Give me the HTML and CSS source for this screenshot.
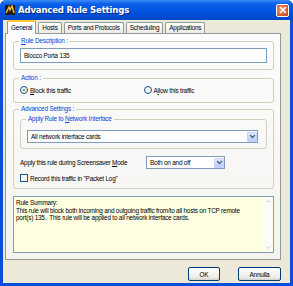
FILE: index.html
```html
<!DOCTYPE html>
<html>
<head>
<meta charset="utf-8">
<link rel="stylesheet" href="styles.css">
</head>
<body>
<div class="window">
  <div class="titlebar">
    <span class="appicon"><svg width="10" height="10" viewBox="0 0 10 10"><rect width="10" height="10" fill="#2b1a10"/><path d="M1 8 L4 2 L5 5 L7 1 L9 8" stroke="#f2c040" stroke-width="1.4" fill="none"/></svg></span>
    <span class="title">Advanced Rule Settings</span>
    <span class="close"><svg width="8" height="8" viewBox="0 0 8 8"><path d="M1 1 L7 7 M7 1 L1 7" stroke="#fff" stroke-width="1.6"/></svg></span>
  </div>
  <div class="client">
    <div class="tabs">
      <span class="tab active">General</span>
      <span class="tab">Hosts</span>
      <span class="tab">Ports and Protocols</span>
      <span class="tab">Scheduling</span>
      <span class="tab">Applications</span>
    </div>
    <div class="panel">
      <fieldset class="group g-desc">
        <legend><u>R</u>ule Description :</legend>
        <div class="input">Blocco Porta 135</div>
      </fieldset>
      <fieldset class="group g-action">
        <legend>Action :</legend>
        <div class="radios">
          <label class="radio"><span class="rb on"></span><span><u>B</u>lock this traffic</span></label>
          <label class="radio"><span class="rb"></span><span>A<u>l</u>low this traffic</span></label>
        </div>
      </fieldset>
      <fieldset class="group g-adv">
        <legend>Advanced Settings :</legend>
        <fieldset class="group g-net">
          <legend>Apply Rule to <u>N</u>etwork Interface</legend>
          <div class="select wide"><span class="val">All network interface cards</span><span class="arrow"><svg width="7" height="5" viewBox="0 0 7 5"><path d="M1 1 L3.5 3.5 L6 1" stroke="#4d6185" stroke-width="1.4" fill="none"/></svg></span></div>
        </fieldset>
        <div class="row-ss">
          <span class="ss-label">Apply this rule during Screensaver <u>M</u>ode</span>
          <div class="select small"><span class="val">Both on and off</span><span class="arrow"><svg width="7" height="5" viewBox="0 0 7 5"><path d="M1 1 L3.5 3.5 L6 1" stroke="#4d6185" stroke-width="1.4" fill="none"/></svg></span></div>
        </div>
        <label class="check"><span class="cb"></span><span>Record this traffic in "Packet Log"</span></label>
      </fieldset>
      <div class="summary">
        <div class="sum-text">Rule Summary:<br>This rule will block both incoming and outgoing traffic from/to all hosts on TCP remote port(s) 135.&nbsp; This rule will be applied to all network interface cards.</div>
        <div class="scroll"><span class="sb-up"><svg width="5" height="3" viewBox="0 0 5 3"><path d="M0.5 2.5 L2.5 0.5 L4.5 2.5" stroke="#c0c4d0" fill="none"/></svg></span><span class="sb-dn"><svg width="5" height="3" viewBox="0 0 5 3"><path d="M0.5 0.5 L2.5 2.5 L4.5 0.5" stroke="#c0c4d0" fill="none"/></svg></span></div>
      </div>
    </div>
    <div class="buttons">
      <span class="btn ok">OK</span>
      <span class="btn cancel">Annulla</span>
    </div>
  </div>
</div>
</body>
</html>
```
FILE: styles.css
```css
html, body { margin: 0; padding: 0; }
body { width: 293px; height: 286px; overflow: hidden; font-family: "Liberation Sans", Arial, sans-serif; font-size: 6.4px; letter-spacing: -0.2px; color: #000; }
.window { width: 293px; height: 286px; box-sizing: border-box; background: #0a4fd8; padding: 0 3px 3px 3px; display: flex; flex-direction: column; border-radius: 6px 6px 0 0; }
.titlebar { height: 20px; flex: none; margin: 0 -3px; padding: 0 4px 0 5px; display: flex; align-items: center; gap: 3px; background: linear-gradient(#3a8cf8 0%, #0a5ee8 20%, #0052e0 60%, #0046c8 100%); border-radius: 6px 6px 0 0; }
.appicon { width: 10px; height: 10px; display: flex; }
.title { flex: 1; color: #fff; font-family: "DejaVu Sans", sans-serif; font-weight: bold; font-size: 8.6px; letter-spacing: -0.2px; text-shadow: 1px 1px 0 #0a2a80; }
.close { width: 13px; height: 13px; box-sizing: border-box; border: 1px solid #fff; border-radius: 2px; background: radial-gradient(circle at 40% 40%, #f09a70, #d4542a 70%, #c03c18); display: flex; align-items: center; justify-content: center; }
.client { flex: 1; background: #ece9d8; padding: 1px 9px 0 2px; display: flex; flex-direction: column; }
.tabs { display: flex; align-items: flex-end; height: 12px; flex: none; padding-left: 2px; gap: 2px; position: relative; z-index: 1; }
.tab { height: 10px; line-height: 10px; padding: 0 3px; border: 1px solid #919b9c; border-bottom: none; border-radius: 2px 2px 0 0; background: linear-gradient(#fff, #ecebe5); white-space: nowrap; }
.tab.active { height: 12px; line-height: 12px; background: #fcfcfe; border-top: 2px solid #ffc83c; margin-bottom: -1px; padding: 0 3px; }
.panel { height: 227px; flex: none; box-sizing: border-box; border: 1px solid #919b9c; background: linear-gradient(#fcfcfe 0%, #f4f3ee 100%); padding: 3px 6px 0 7px; display: flex; flex-direction: column; }
.group { margin: 0; border: 1px solid #d0d0bf; border-radius: 3px; padding: 3px 6px 6px 6px; min-width: 0; }
.group legend { padding: 0 2px; margin-left: -1px; color: #0046d5; line-height: 8px; height: 8px; }
.input { height: 15px; box-sizing: border-box; border: 1px solid #7f9db9; background: #fff; padding-left: 3px; line-height: 13px; }
.g-action { margin-top: 4px; padding: 1px 6px 5px 6px; }
.radios { display: flex; height: 14px; align-items: center; }
.radio { display: flex; align-items: center; gap: 2px; width: 126px; }
.rb { width: 8px; height: 8px; border: 1px solid #1c5180; border-radius: 50%; background: #f2f2ee; box-sizing: border-box; position: relative; }
.rb.on::after { content: ""; position: absolute; left: 2px; top: 2px; width: 2px; height: 2px; border-radius: 50%; background: #21a121; }
.g-adv { margin-top: 2px; padding: 2px 6px 5px 6px; }
.g-net { padding: 7px 8px 5px 6px; }
.select { height: 13px; box-sizing: border-box; border: 1px solid #7f9db9; background: #fff; display: flex; align-items: center; padding-left: 3px; }
.select .val { flex: 1; }
.arrow { width: 10px; height: 10px; margin-right: 0; background: linear-gradient(#e4ecfc, #b9cdf6); border: 1px solid #c3d3fd; box-sizing: border-box; border-radius: 1px; display: flex; align-items: center; justify-content: center; }
.row-ss { display: flex; align-items: center; height: 13px; margin-top: 7px; }
.ss-label { width: 126px; }
.select.small { width: 79px; }
.check { display: flex; align-items: center; gap: 2px; height: 10px; margin-top: 4px; }
.cb { width: 8px; height: 8px; border: 1px solid #1c5180; background: #f4f4f0; box-sizing: border-box; }
.summary { margin-top: 7px; height: 57px; flex: none; box-sizing: border-box; border: 1px solid #7f9db9; background: #ffffe1; display: flex; }
.sum-text { flex: 1; padding: 2px 8px 2px 2px; line-height: 7.5px; }
.scroll { width: 8px; margin: 1px; background: #fbfbf8; display: flex; flex-direction: column; justify-content: space-between; align-items: center; padding: 2px 0; box-sizing: border-box; }
.scroll span { display: flex; }
.buttons { display: flex; justify-content: flex-end; gap: 18px; padding-top: 7px; }
.btn { width: 32px; height: 14px; box-sizing: border-box; border: 1px solid #003c74; border-radius: 2px; background: linear-gradient(#fff, #ecebe6 80%, #d6d0c5); display: flex; align-items: center; justify-content: center; }
.btn.cancel { width: 43px; }
```
